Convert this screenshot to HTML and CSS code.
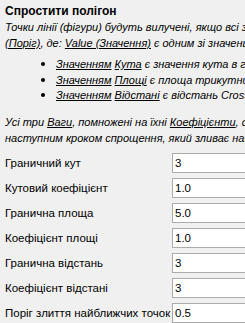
FILE: index.html
```
<!DOCTYPE html>
<html lang="uk">
<head>
  <meta charset="UTF-8">
  <title>Спростити полігон</title>
  <link rel="stylesheet" href="styles.css">
</head>
<body>
  <div class="panel">
    <h1 class="title">Спростити полігон</h1>

    <!-- Help text -->
    <div class="help">
      <p class="line">Точки лінії (фігури) будуть вилучені, якщо всі з трьох <u>Значень</u> менші за <u>Threshold</u></p>
      <p class="line"><u>(Поріг)</u>, де: <u>Value (Значення)</u> є одним зі значень, описаних нижче:</p>
      <ul class="bullets">
        <li><u>Значенням</u> <u>Кута</u> є значення кута в градусах між сусідніми сегментами</li>
        <li><u>Значенням</u> <u>Площі</u> є площа трикутника, утвореного трьома точками</li>
        <li><u>Значенням</u> <u>Відстані</u> є відстань Cross Track від точки до лінії</li>
      </ul>
      <p class="line">Усі три <u>Ваги</u>, помножені на їхні <u>Коефіцієнти</u>, сумуються, і точка вилучається</p>
      <p class="line">наступним кроком спрощення, який зливає найближчі точки разом.</p>
    </div>

    <!-- Parameters -->
    <div class="form">
      <label class="label">Граничний кут</label>
      <input class="field" type="text" value="3">
      <label class="label">Кутовий коефіцієнт</label>
      <input class="field" type="text" value="1.0">
      <label class="label">Гранична площа</label>
      <input class="field" type="text" value="5.0">
      <label class="label">Коефіцієнт площі</label>
      <input class="field" type="text" value="1.0">
      <label class="label">Гранична відстань</label>
      <input class="field" type="text" value="3">
      <label class="label">Коефіцієнт відстані</label>
      <input class="field" type="text" value="3">
      <label class="label">Поріг злиття найближчих точок</label>
      <input class="field" type="text" value="0.5">
    </div>
  </div>
</body>
</html>
```

FILE: styles.css
```
html, body {
  overflow: hidden;
}
body {
  margin: 0;
  background-color: #f0f0f0;
  color: #000;
  font-family: "Liberation Sans", Arial, sans-serif;
  font-size: 11px;
}
.panel {
  width: 600px;
  padding: 3px 5px;
}
.title {
  font-size: 12px;
  font-weight: bold;
  line-height: 16px;
  margin: 0;
}
.help {
  font-style: italic;
  white-space: nowrap;
}
.line {
  margin: 0;
  line-height: 16px;
}
.bullets {
  margin: 5px 0 8px 0;
  padding-left: 51px;
  list-style: disc;
  line-height: 14.5px;
}
.bullets li::marker {
  font-size: 14px;
}
.bullets + .line {
  margin-top: 11px;
}
.form {
  display: grid;
  grid-template-columns: 167px 120px;
  row-gap: 5px;
  margin-top: 7px;
  align-items: center;
}
.label {
  white-space: nowrap;
  font-size: 11.5px;
}
.field {
  height: 20px;
  box-sizing: border-box;
  border: 1px solid #ababab;
  background: #fff;
  padding: 0 2px;
  margin: 0;
  font-family: "Liberation Sans", Arial, sans-serif;
  font-size: 11.5px;
  color: #000;
  outline: none;
}
```
